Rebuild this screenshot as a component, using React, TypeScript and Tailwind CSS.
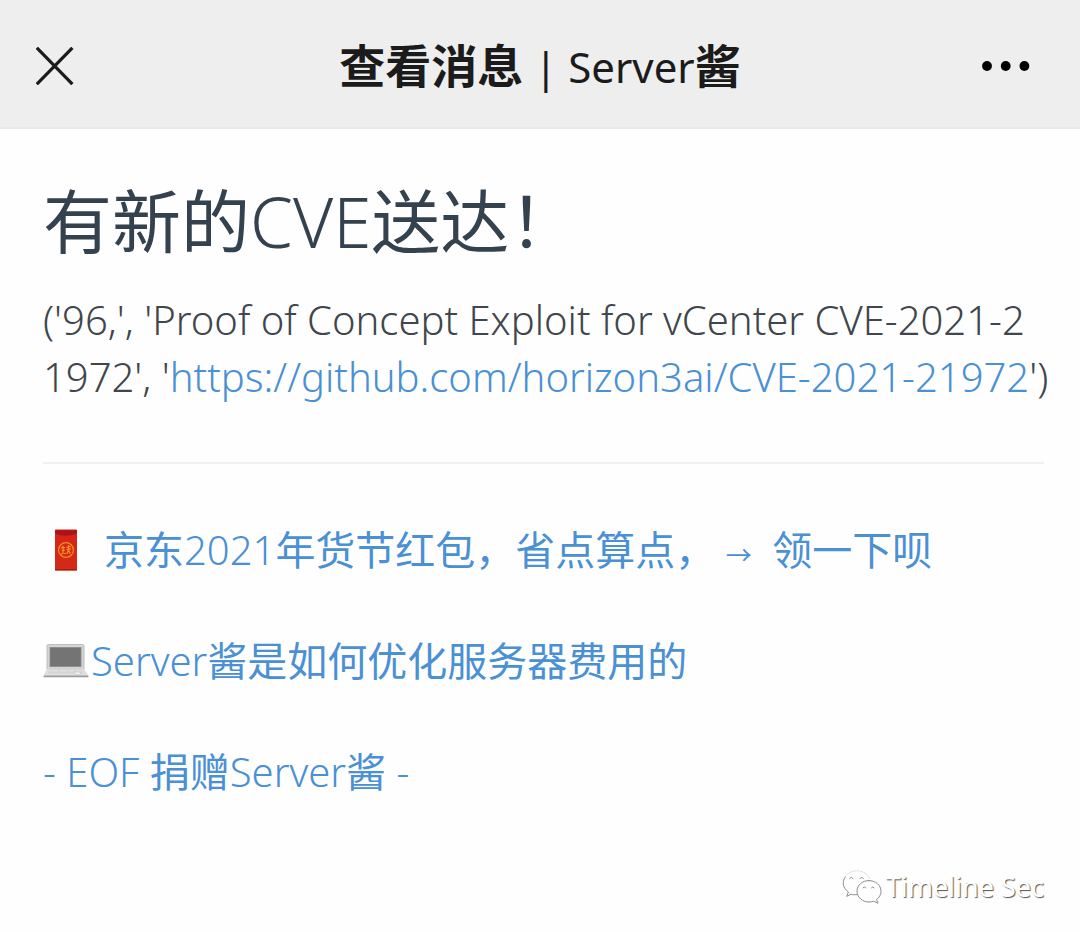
import type { ReactNode } from "react";

function RedEnvelope() {
  return (
    <svg viewBox="0 0 24 42" className="h-[42px] w-6 shrink-0" aria-hidden="true">
      <defs>
        <linearGradient id="envelope" x1="0" y1="0" x2="0" y2="1">
          <stop offset="0" stopColor="#d8231a" />
          <stop offset="1" stopColor="#d42a16" />
        </linearGradient>
      </defs>
      <rect x="1" y="0.5" width="22" height="41" rx="1" fill="url(#envelope)" />
      <path d="M1 1.2h22v3.4Q12 9 1 4.6z" fill="#a8141a" />
      <path d="M1 40h22v1.4H1z" fill="#a51c12" />
      <circle cx="12" cy="21" r="7.4" fill="none" stroke="#f0901e" strokeWidth="1.2" />
      <path
        d="M7 18.6h4M7.6 21.4h3.2M9 16.8v7.6l-2 .8M10.4 23.8l1 1.4M12.4 18.4l4.2-1M14.6 16v5.4l-2 3.4M12.6 20.6l4.6-.8M14.6 21.4l1.8 3.2"
        fill="none"
        stroke="#f0901e"
        strokeWidth="1.3"
      />
    </svg>
  );
}

function Laptop() {
  return (
    <svg viewBox="0 0 46 34" className="h-[34px] w-[46px] shrink-0" aria-hidden="true">
      <path d="M5.4 0.5h34.2q1.4 0 1.4 1.4V25H4V1.9Q4 .5 5.4.5z" fill="#d5d5d5" stroke="#b2b2b2" strokeWidth="0.8" />
      <rect x="7" y="3.4" width="31" height="19.2" fill="#747474" stroke="#8b8b8b" strokeWidth="0.8" />
      <path d="M4 24.5h37l4.4 7.3H.6z" fill="#dedede" />
      <path d="M7 26h31l1 2.6H6z" fill="#f2f2f2" stroke="#c3c3c3" strokeWidth="0.6" />
      <path d="M16 26v2.6M25 26v2.6M32 26v2.6M7 27.3h31" stroke="#c3c3c3" strokeWidth="0.6" />
      <path d="M31 28.2h6l.8 2H32z" fill="#fff" stroke="#b5b5b5" strokeWidth="0.5" />
      <path d="M.6 31.6h44.8v1.6H.6z" fill="#9b9b9b" />
    </svg>
  );
}

function WeChatMark() {
  return (
    <svg viewBox="0 0 40 34" className="h-[34px] w-10 shrink-0" aria-hidden="true">
      <g fill="none" stroke="#8d8d8d" strokeWidth="1" strokeLinecap="round">
        <path d="M3.4 6.8C-.4 11.8.8 18 6.400 22l-1.800 4.400 4.400-2.200c1.600.6 3.600.8 6 .4" />
        <path d="M5 4.800C11-1.400 23.400-.6 27.400 8.600" stroke="#d8d8d8" strokeDasharray="2 1.6" />
        <path d="M27 10.600c-6.600-.2-12 4.600-12 10.600s5.400 10.800 12 10.800c1.600 0 3-.2 4.400-.8l4.600 2-1.500-3.600c2.800-2 4.500-5 4.500-8.400 0-6-5.400-10.600-12-10.600z" fill="#fff" />
        <path d="M7.600 8.400q1.700-2.400 3.400 0M18 8.400q1.700-2.400 3.400 0M21 17.800q1.400-2 2.800 0M29.400 17.800q1.400-2 2.800 0" />
      </g>
    </svg>
  );
}

function Cjk({ children }: { children: ReactNode }) {
  return <span className="font-normal">{children}</span>;
}

function BlueLink({ children }: { children: ReactNode }) {
  return (
    <a href="#" className="flex items-center text-[#4a90d4]">
      {children}
    </a>
  );
}

export default function App() {
  return (
    <div className="flex min-h-screen flex-col bg-[#fefefe] font-['Noto_Sans','Noto_Sans_CJK_SC',sans-serif]">
      <header className="flex h-[129px] items-center justify-between border-b-2 border-[#e9e9e9] bg-[#eeeeee] px-9 pt-1">
        <button type="button" aria-label="关闭" className="flex w-14 justify-start">
          <svg viewBox="0 0 38 38" className="h-[38px] w-[38px]" aria-hidden="true">
            <path d="M.8.8l35.600 36.400M36.400.8L.8 37.200" stroke="#1b1b1b" strokeWidth="3.200" />
          </svg>
        </button>
        <h1 className="text-[42px] leading-[60px] text-[#1b1b1b]">
          <span className="text-[46px] font-bold">查看消息</span> | Server
          <span className="text-[46px] font-bold">酱</span>
        </h1>
        <button type="button" aria-label="更多" className="flex w-14 justify-end pr-3">
          <svg viewBox="0 0 50 12" className="h-3 w-[50px] shrink-0" aria-hidden="true">
            <circle cx="5" cy="6" r="4.900" />
            <circle cx="23.700" cy="6" r="4.900" />
            <circle cx="42.400" cy="6" r="4.900" />
          </svg>
        </button>
      </header>

      <main className="flex grow flex-col pt-10 pr-9 pl-[43px] text-[40px] leading-[57px] font-light text-[#40464c]">
        <h2 className="text-[69px] leading-[104px] text-[#34424f]">
          <Cjk>有新的</Cjk>CVE<Cjk>送达！</Cjk>
        </h2>
        <p className="mt-[18px] -mr-5 break-all">
          ('96,', 'Proof of Concept Exploit for vCenter CVE-2021-2
          <br />
          1972', '
          <a href="https://github.com/horizon3ai/CVE-2021-21972" className="text-[#4a90d4]">
            https://github.com/horizon3ai/CVE-2021-21972
          </a>
          ')
        </p>
        <hr className="mt-[57px] border-t-2 border-[#f0f0f0]" />
        <div className="mt-[57px] flex flex-col gap-[54px]">
          <BlueLink>
            <span className="flex w-[61px] pl-[11px]">
              <RedEnvelope />
            </span>
            <span>
              <Cjk>京东</Cjk>2021<Cjk>年货节红包，省点算点，</Cjk>{" "}
              <span className="mr-2.5 text-[26px] leading-none font-normal">→</span> <Cjk>领一下呗</Cjk>
            </span>
          </BlueLink>
          <BlueLink>
            <span className="flex w-12">
              <Laptop />
            </span>
            <span>
              Server<Cjk>酱是如何优化服务器费用的</Cjk>
            </span>
          </BlueLink>
          <BlueLink>
            <span>
              - EOF <Cjk>捐赠</Cjk>Server<Cjk>酱</Cjk> -
            </span>
          </BlueLink>
        </div>
      </main>

      <footer className="flex items-center justify-end gap-1 pr-9 pb-[25px] text-[27px] leading-10 font-normal text-white">
        <WeChatMark />
        <span className="[text-shadow:1px_1px_1px_#555]">Timeline Sec</span>
      </footer>
    </div>
  );
}
